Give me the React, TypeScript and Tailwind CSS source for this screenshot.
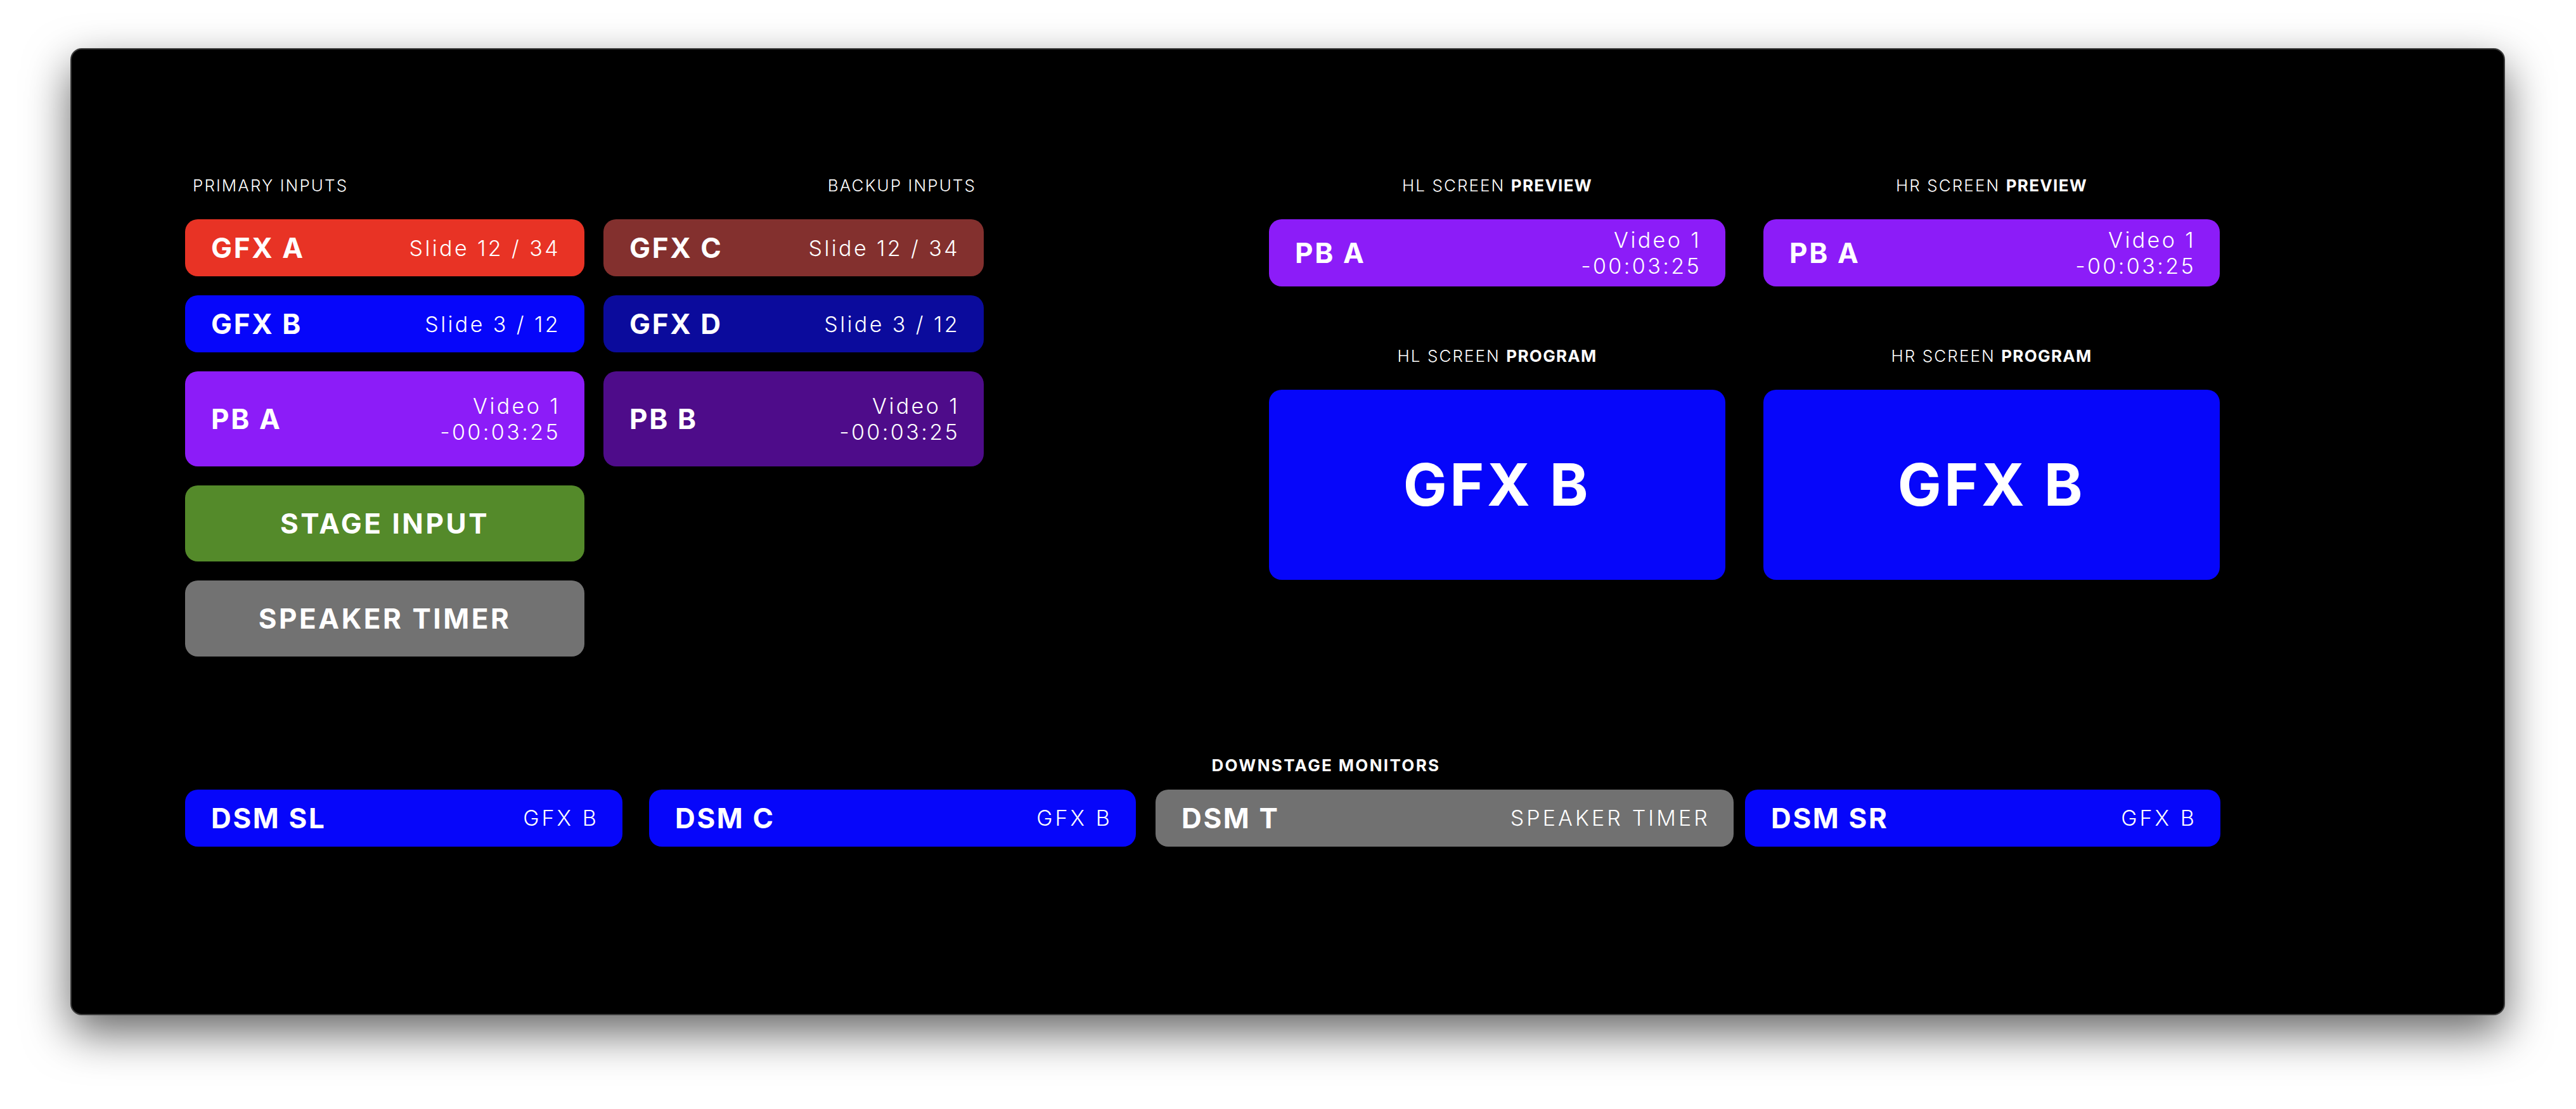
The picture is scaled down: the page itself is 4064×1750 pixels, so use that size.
const FONT = "font-['Inter','Liberation_Sans',sans-serif]";

type Source = {
	name: string;
	color: string;
	detail?: string[];
	tall?: boolean;
};

const primary: Source[] = [
	{ name: "GFX A", color: "bg-[#e83325]", detail: ["Slide 12 / 34"] },
	{ name: "GFX B", color: "bg-[#0606fa]", detail: ["Slide 3 / 12"] },
	{ name: "PB A", color: "bg-[#8c1cf8]", detail: ["Video 1", "-00:03:25"], tall: true },
];

const backup: Source[] = [
	{ name: "GFX C", color: "bg-[#83302e]", detail: ["Slide 12 / 34"] },
	{ name: "GFX D", color: "bg-[#0b0b9c]", detail: ["Slide 3 / 12"] },
	{ name: "PB B", color: "bg-[#4e0c8a]", detail: ["Video 1", "-00:03:25"], tall: true },
];

const monitors = [
	{ name: "DSM SL", source: "GFX B", color: "bg-[#0606fa]", width: "w-[690px]", gap: "" },
	{ name: "DSM C", source: "GFX B", color: "bg-[#0606fa]", width: "w-[768px]", gap: "ml-[42px]" },
	{ name: "DSM T", source: "SPEAKER TIMER", color: "bg-[#717171]", width: "w-[912px]", gap: "ml-[31px]" },
	{ name: "DSM SR", source: "GFX B", color: "bg-[#0606fa]", width: "w-[750px]", gap: "ml-[18px]" },
];

const Label = ({ children, align = "text-left" }: { children: React.ReactNode; align?: string }) => (
	<div className={`mb-[38px] px-[12px] text-[26px] leading-[30px] font-light tracking-[0.08em] text-white ${align}`}>
		{children}
	</div>
);

const SourceTile = ({ source, height }: { source: Source; height: string }) => (
	<div className={`flex items-center justify-between rounded-[20px] px-[41px] ${height} ${source.color}`}>
		<span className="text-[44px] leading-none font-bold tracking-[0.06em] text-white">{source.name}</span>
		<div className="-mr-[3px] flex flex-col items-end text-[34px] leading-[41px] font-light tracking-[0.1em] text-white">
			{source.detail?.map((line) => (
				<span key={line}>{line}</span>
			))}
		</div>
	</div>
);

const WideTile = ({ label, color }: { label: string; color: string }) => (
	<div className={`flex h-[120px] items-center justify-center rounded-[20px] ${color}`}>
		<span className="text-[44px] leading-none font-bold tracking-[0.08em] text-white">{label}</span>
	</div>
);

const ScreenColumn = ({ screen }: { screen: string }) => (
	<div className="flex w-[720px] flex-col">
		<Label align="text-center">
			{screen} SCREEN <span className="font-bold tracking-[0.05em]">PREVIEW</span>
		</Label>
		<SourceTile
			source={{ name: "PB A", color: "bg-[#8c1cf8]", detail: ["Video 1", "-00:03:25"] }}
			height="h-[106px]"
		/>
		<div className="mt-[95px]">
			<Label align="text-center">
				{screen} SCREEN <span className="font-bold tracking-[0.05em]">PROGRAM</span>
			</Label>
		</div>
		<div className="flex h-[300px] items-center justify-center rounded-[20px] bg-[#0606fa]">
			<span className="text-[92px] leading-none font-bold tracking-[0.05em] text-white">GFX B</span>
		</div>
	</div>
);

export default function App() {
	return (
		<div className={`h-[1750px] w-[4064px] overflow-hidden bg-white pt-[76px] pl-[111px] ${FONT}`}>
			<div className="h-[1526px] w-[3841px] rounded-[18px] border-2 border-[#3c3c3c] bg-black pt-[200px] pl-[179px] shadow-[0_28px_70px_rgba(0,0,0,0.6)]">
				<div className="flex">
					<div className="flex w-[630px] flex-col">
						<Label>PRIMARY INPUTS</Label>
						<div className="flex flex-col gap-[30px]">
							{primary.map((s) => (
								<SourceTile key={s.name} source={s} height={s.tall ? "h-[150px]" : "h-[90px]"} />
							))}
							<WideTile label="STAGE INPUT" color="bg-[#548a2a]" />
							<WideTile label="SPEAKER TIMER" color="bg-[#727272]" />
						</div>
					</div>

					<div className="ml-[30px] flex w-[600px] flex-col">
						<Label align="text-right">BACKUP INPUTS</Label>
						<div className="flex flex-col gap-[30px]">
							{backup.map((s) => (
								<SourceTile key={s.name} source={s} height={s.tall ? "h-[150px]" : "h-[90px]"} />
							))}
						</div>
					</div>

					<div className="ml-[450px] flex gap-[60px]">
						<ScreenColumn screen="HL" />
						<ScreenColumn screen="HR" />
					</div>
				</div>

				<div className="mt-[157px] w-[3600px] text-center">
					<div className="mb-[23px] text-[26px] leading-[30px] font-bold tracking-[0.09em] text-white">
						DOWNSTAGE MONITORS
					</div>
				</div>
				<div className="flex">
					{monitors.map((m) => (
						<div
							key={m.name}
							className={`flex h-[90px] items-center justify-between rounded-[20px] px-[41px] ${m.width} ${m.gap} ${m.color}`}
						>
							<span className="text-[44px] leading-none font-bold tracking-[0.06em] text-white">{m.name}</span>
							<span className="-mr-[4px] text-[34px] leading-none font-light tracking-[0.12em] text-white">
								{m.source}
							</span>
						</div>
					))}
				</div>
			</div>
		</div>
	);
}
